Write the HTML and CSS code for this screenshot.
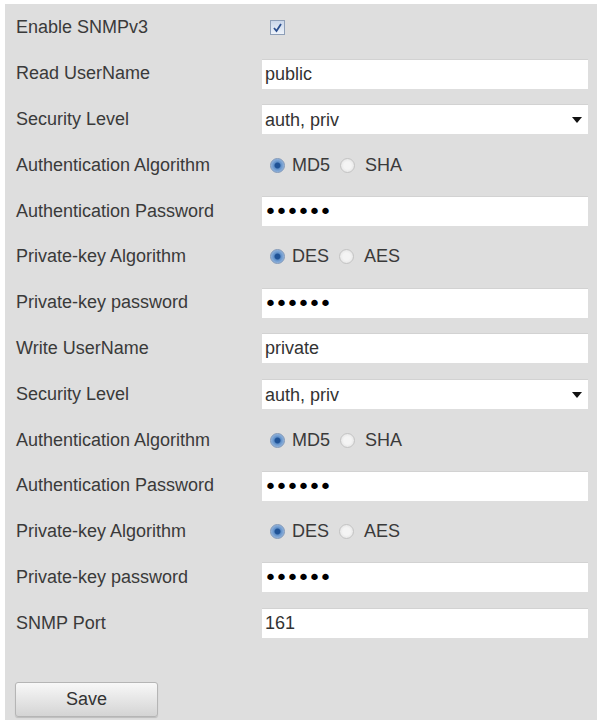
FILE: index.html
```html
<!DOCTYPE html>
<html lang="en">

<head>
  <meta charset="UTF-8" />
  <title>SNMPv3</title>
  <link rel="stylesheet" href="styles.css">
</head>

<body>
  <div class="panel">
    <div class="row">
      <span class="label">Enable SNMPv3</span>
      <span class="field">
        <span class="check">
          <svg width="15" height="15" viewBox="0 0 15 15">
            <path d="M4 8 L6.5 11 L11 4" fill="none" stroke="#2b4f8f" stroke-width="1.8" />
          </svg>
        </span>
      </span>
    </div>
    <div class="row">
      <span class="label">Read UserName</span>
      <span class="field"><input class="box" type="text" value="public"></span>
    </div>
    <div class="row">
      <span class="label">Security Level</span>
      <span class="field"><span class="select"><select class="box"><option>auth, priv</option></select></span></span>
    </div>
    <div class="row">
      <span class="label">Authentication Algorithm</span>
      <span class="field">
        <label class="opt"><input type="radio" name="a1" checked>MD5</label>
        <label class="opt"><input type="radio" name="a1">SHA</label>
      </span>
    </div>
    <div class="row">
      <span class="label">Authentication Password</span>
      <span class="field"><input class="box pwd" type="password" value="123456"></span>
    </div>
    <div class="row">
      <span class="label">Private-key Algorithm</span>
      <span class="field">
        <label class="opt"><input type="radio" name="p1" checked>DES</label>
        <label class="opt"><input type="radio" name="p1">AES</label>
      </span>
    </div>
    <div class="row">
      <span class="label">Private-key password</span>
      <span class="field"><input class="box pwd" type="password" value="123456"></span>
    </div>
    <div class="row">
      <span class="label">Write UserName</span>
      <span class="field"><input class="box" type="text" value="private"></span>
    </div>
    <div class="row">
      <span class="label">Security Level</span>
      <span class="field"><span class="select"><select class="box"><option>auth, priv</option></select></span></span>
    </div>
    <div class="row">
      <span class="label">Authentication Algorithm</span>
      <span class="field">
        <label class="opt"><input type="radio" name="a2" checked>MD5</label>
        <label class="opt"><input type="radio" name="a2">SHA</label>
      </span>
    </div>
    <div class="row">
      <span class="label">Authentication Password</span>
      <span class="field"><input class="box pwd" type="password" value="123456"></span>
    </div>
    <div class="row">
      <span class="label">Private-key Algorithm</span>
      <span class="field">
        <label class="opt"><input type="radio" name="p2" checked>DES</label>
        <label class="opt"><input type="radio" name="p2">AES</label>
      </span>
    </div>
    <div class="row">
      <span class="label">Private-key password</span>
      <span class="field"><input class="box pwd" type="password" value="123456"></span>
    </div>
    <div class="row">
      <span class="label">SNMP Port</span>
      <span class="field"><input class="box" type="text" value="161"></span>
    </div>
    <div class="actions">
      <button class="btn">Save</button>
    </div>
  </div>
</body>

</html>
```

FILE: styles.css
```css
html,
body {
  margin: 0;
  padding: 0;
  background-color: #ffffff;
}

body {
  padding: 4px 4px 6px 5px;
  font-family: "Liberation Sans", Arial, sans-serif;
  color: #3a3a3a;
}

.panel {
  background-color: #dedede;
  height: 716px;
  box-sizing: border-box;
  padding: 1px 9px 0 11px;
}

.row {
  display: flex;
  align-items: center;
  height: 45.8px;
}

.label {
  width: 246px;
  font-size: 18px;
}

.field {
  display: flex;
  align-items: center;
  width: 326px;
}

.box {
  width: 326px;
  height: 30px;
  box-sizing: border-box;
  border: none;
  border-top: 1px solid #d2d2d2;
  background-color: #ffffff;
  padding: 0 3px;
  margin: 0;
  font-family: "Liberation Sans", Arial, sans-serif;
  font-size: 18px;
  color: #333333;
  outline: none;
}

.pwd {
  font-family: "DejaVu Sans", sans-serif;
  font-size: 22px;
  letter-spacing: -2px;
  padding-left: 2px;
  color: #000000;
}

.select {
  position: relative;
  display: block;
}

.select select {
  -webkit-appearance: none;
  appearance: none;
  display: block;
}

.select::after {
  content: "";
  position: absolute;
  right: 6px;
  top: 13px;
  border-left: 5px solid transparent;
  border-right: 5px solid transparent;
  border-top: 6px solid #111111;
}

.check {
  display: block;
  width: 15px;
  height: 15px;
  margin-left: 8px;
  box-sizing: border-box;
  border: 1px solid #8e9fb8;
  background: linear-gradient(#c9d6ea, #eef3fa);
}

.check svg {
  display: block;
  margin: -1px;
}

.opt {
  display: flex;
  align-items: center;
  font-size: 18px;
  margin-right: 10px;
  color: #3a3a3a;
}

.opt input {
  -webkit-appearance: none;
  appearance: none;
  width: 15px;
  height: 15px;
  margin: 0 7px 0 8px;
  border-radius: 50%;
  border: 1px solid #c4c4c4;
  background: radial-gradient(circle, #f4f4f4 40%, #dcdcdc 100%);
}

.opt + .opt input {
  margin-left: 0;
  margin-right: 10px;
}

.opt input:checked {
  border-color: #7f97b8;
  background: radial-gradient(circle, #1f5296 0, #1f5296 2.5px, #5f8fc8 3.5px, #bcd2ee 100%);
}

.actions {
  padding-top: 36px;
}

.btn {
  width: 143px;
  height: 35px;
  margin-left: -1px;
  border: 1px solid #b5b5b5;
  border-radius: 3px;
  background: linear-gradient(#f8f8f8, #e4e4e4 55%, #d4d4d4);
  box-shadow: 0 1px 1px rgba(0, 0, 0, 0.15);
  font-family: "Liberation Sans", Arial, sans-serif;
  font-size: 18px;
  color: #333333;
}
```
